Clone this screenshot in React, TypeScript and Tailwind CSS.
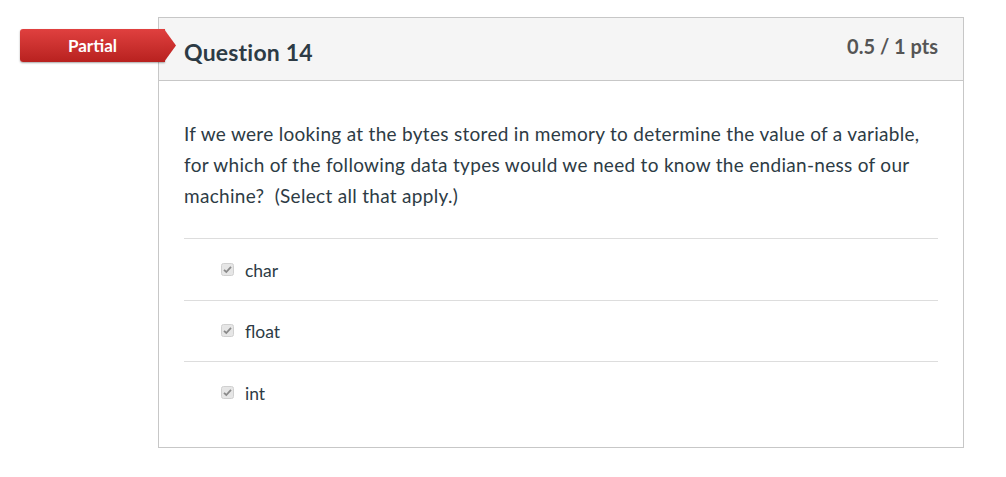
import React from 'react';

const answers = ['char', 'float', 'int'];

function CheckMark() {
  return (
    <svg width="13" height="13" viewBox="0 0 13 13" className="shrink-0" aria-hidden="true">
      <rect x="0.5" y="0.5" width="12" height="12" rx="2" fill="#e6e6e6" stroke="#d0d0d0" />
      <path d="M3 6.8 L5.3 9 L10 3.8" fill="none" stroke="#8a8a8a" strokeWidth="1.8" />
    </svg>
  );
}

export default function App() {
  return (
    <div className="h-[477px] w-[1006px] bg-white font-['Lato','Open_Sans',sans-serif] text-[#2d3b45]">
      <div className="relative pl-[158px] pt-[17px]">
        {/* status ribbon */}
        <div className="absolute left-[20px] top-[29px] flex h-[33px] items-center">
          <div className="flex h-full w-[145px] items-center justify-center rounded-l-[3px] bg-gradient-to-b from-[#e0403f] to-[#b8211f] text-[17px] font-bold text-white shadow-[0_1px_2px_rgba(0,0,0,0.35)]">
            Partial
          </div>
          <svg width="12" height="33" viewBox="0 0 12 33" className="-ml-px" aria-hidden="true">
            <defs>
              <linearGradient id="rib" x1="0" y1="0" x2="0" y2="1">
                <stop offset="0" stopColor="#e0403f" />
                <stop offset="1" stopColor="#b8211f" />
              </linearGradient>
            </defs>
            <polygon points="0,0 12,16.5 0,33" fill="url(#rib)" />
          </svg>
        </div>

        <div className="w-[806px] border border-[#c7c7c7]">
          <div className="flex h-[63px] items-start justify-between border-b border-[#c7c7c7] bg-[#f5f5f5] px-[25px]">
            <h2 className="pt-[19px] text-[23px] font-bold leading-[30px] tracking-[0.2px] text-[#2d3b45]">Question 14</h2>
            <div className="pt-[14px] text-[20px] font-bold leading-[28px] text-[#555555]">0.5 / 1 pts</div>
          </div>

          <div className="px-[25px] pb-[24px] pt-[37px]">
            <p className="text-[19px] leading-[31px] tracking-[0.3px]">
              If we were looking at the bytes stored in memory to determine the value of a variable,
              for which of the following data types would we need to know the endian-ness of our
              machine?&nbsp; (Select all that apply.)
            </p>

            <div className="mt-[27px]">
              {answers.map((a) => (
                <div key={a} className="flex h-[61.5px] items-center gap-[11px] border-t border-[#dddddd] pl-[37px] pt-[3px]">
                  <div className="-mt-[3px]">
                    <CheckMark />
                  </div>
                  <span className="text-[17.5px] leading-[24px]">{a}</span>
                </div>
              ))}
            </div>
          </div>
        </div>
      </div>
    </div>
  );
}
